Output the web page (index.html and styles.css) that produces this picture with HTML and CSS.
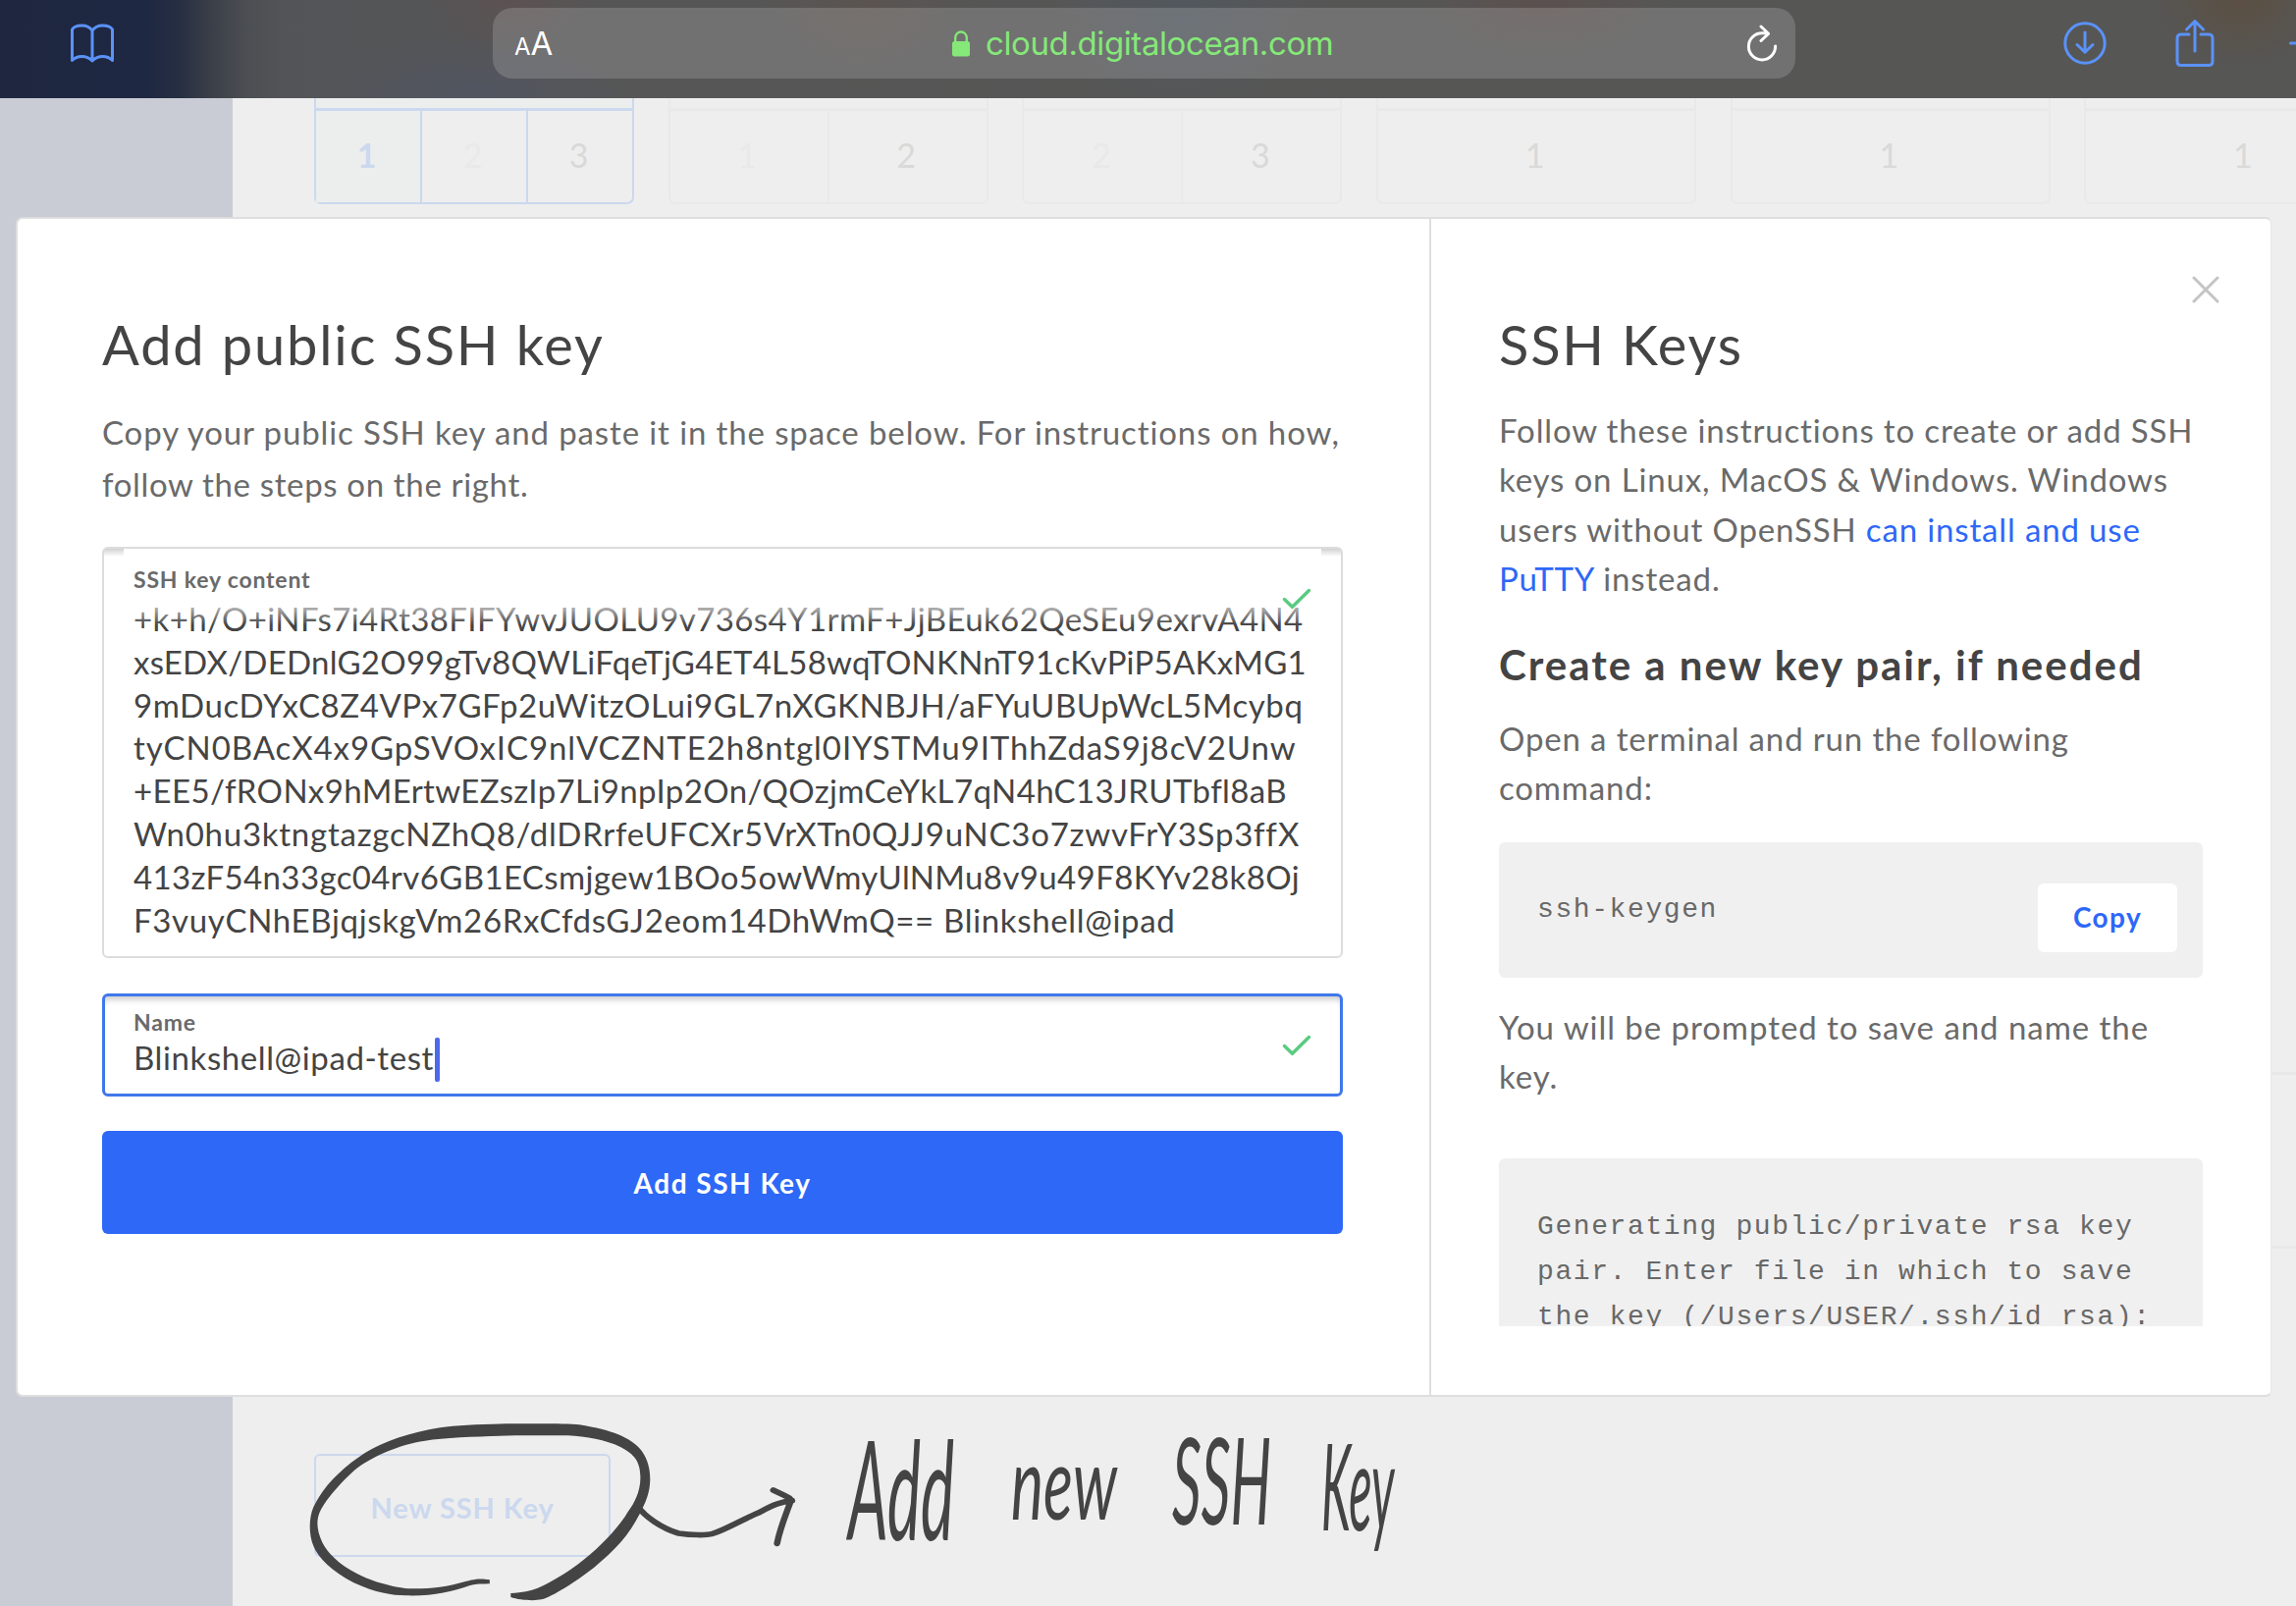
FILE: index.html
```html
<!DOCTYPE html>
<html lang="en">
<head>
<meta charset="utf-8">
<title>Add public SSH key</title>
<link rel="stylesheet" href="styles.css">
</head>
<body>
<header class="toolbar">
  <svg class="icon-book" viewBox="0 0 48 42" width="48" height="42"><path d="M24 8C21 4 17.500 3 13.500 3S5 4.500 3.500 7V38.500C6.500 35.500 9.500 34.500 13.500 34.500S21 36 24 39C27 36 30.500 34.500 34.500 34.500S41.500 35.500 44.500 38.500V7C43 4.500 38.500 3 34.500 3S27 4 24 8ZM24 8V39"/></svg>
  <div class="address">
    <div class="reader"><span class="reader-small">A</span><span class="reader-big">A</span></div>
    <div class="site">
      <svg viewBox="0 0 18 27" width="18" height="27"><rect x="0" y="11" width="18" height="15.500" rx="2.500" fill="#85e878"/><path d="M3.200 12V7.500a5.800 6 0 0 1 11.600 0V12" fill="none" stroke="#85e878" stroke-width="2.300"/></svg>
      <span>cloud.digitalocean.com</span>
    </div>
    <svg class="icon-reload" viewBox="0 0 32 38" width="32" height="38"><path d="M22 8.700H16A13.600 13.600 0 1 0 29.600 22M15 2L22.500 9.300L15 16.500"/></svg>
  </div>
  <div class="actions">
    <svg viewBox="0 0 46 46" width="46" height="46"><circle cx="23" cy="23" r="20.200"/><path d="M23 12V32M15 24.500L23 32.300L31 24.500"/></svg>
    <svg viewBox="0 0 42 52" width="42" height="52"><path d="M15 17H7Q3 17 3 21V44.500Q3 48.500 7 48.500H35Q39 48.500 39 44.500V21Q39 17 35 17H27M21 34V3.500M12.500 12L21 3.500L29.500 12"/></svg>
    <svg class="icon-plus" viewBox="0 0 36 36" width="36" height="36"><path d="M1.500 18H34.500M18 1.500V34.500"/></svg>
  </div>
</header>

<div class="page">
  <aside class="sidebar"></aside>
  <main class="content">
    <div class="regions">
      <div class="region selected"><span class="slot active">1</span><span class="slot off">2</span><span class="slot">3</span></div>
      <div class="region"><span class="slot off">1</span><span class="slot">2</span></div>
      <div class="region"><span class="slot off">2</span><span class="slot">3</span></div>
      <div class="region"><span class="slot">1</span></div>
      <div class="region"><span class="slot">1</span></div>
      <div class="region"><span class="slot">1</span></div>
    </div>
    <div class="panel-edge"></div>
    <div class="new-key">New SSH Key</div>
  </main>
</div>

<section class="modal">
  <div class="form-pane">
    <h1>Add public SSH key</h1>
    <p class="intro">Copy your public SSH key and paste it in the space below. For instructions on how, <span class="intro-end">follow the steps on the right.</span></p>
    <div class="field key-field">
      <div class="label">SSH key content</div>
      <div class="key-text">
        <span class="k1">+k+h/O+iNFs7i4Rt38FIFYwvJUOLU9v736s4Y1rmF+JjBEuk62QeSEu9exrvA4N4</span>
        <span class="k2">xsEDX/DEDnlG2O99gTv8QWLiFqeTjG4ET4L58wqTONKNnT91cKvPiP5AKxMG1</span>
        <span class="k3">9mDucDYxC8Z4VPx7GFp2uWitzOLui9GL7nXGKNBJH/aFYuUBUpWcL5Mcybq</span>
        <span class="k4">tyCN0BAcX4x9GpSVOxIC9nlVCZNTE2h8ntgl0IYSTMu9IThhZdaS9j8cV2Unw</span>
        <span class="k5">+EE5/fRONx9hMErtwEZszIp7Li9npIp2On/QOzjmCeYkL7qN4hC13JRUTbfl8aB</span>
        <span class="k6">Wn0hu3ktngtazgcNZhQ8/dlDRrfeUFCXr5VrXTn0QJJ9uNC3o7zwvFrY3Sp3ffX</span>
        <span class="k7">413zF54n33gc04rv6GB1ECsmjgew1BOo5owWmyUlNMu8v9u49F8KYv28k8Oj</span>
        <span class="k8">F3vuyCNhEBjqjskgVm26RxCfdsGJ2eom14DhWmQ== Blinkshell@ipad</span>
      </div>
      <svg class="check" viewBox="0 0 30 22" width="30" height="22"><path d="M2.500 11.500L10.500 19.300L27.500 2.500"/></svg>
    </div>
    <div class="field name-field">
      <div class="label">Name</div>
      <div class="value">Blinkshell@ipad-test<i class="caret"></i></div>
      <svg class="check" viewBox="0 0 30 22" width="30" height="22"><path d="M2.500 11.500L10.500 19.300L27.500 2.500"/></svg>
    </div>
    <div class="submit">Add SSH Key</div>
  </div>
  <div class="help-pane">
    <svg class="close" viewBox="0 0 28 28" width="28" height="28"><path d="M2 2L26 26M26 2L2 26"/></svg>
    <h1>SSH Keys</h1>
    <div class="help-scroll">
      <p>Follow these instructions to create or add SSH<br>keys on Linux, MacOS &amp; Windows. Windows<br>users without OpenSSH <a>can install and use<br>PuTTY</a> instead.</p>
      <h2>Create a new key pair, if needed</h2>
      <p>Open a terminal and run the following<br>command:</p>
      <div class="code command"><code>ssh-keygen</code><div class="copy">Copy</div></div>
      <p class="after">You will be prompted to save and name the<br>key.</p>
      <div class="code output"><code>Generating public/private rsa key<br>pair. Enter file in which to save<br>the key (/Users/USER/.ssh/id_rsa):</code></div>
    </div>
  </div>
</section>

<div class="annotation">
  <svg class="circle-arrow" viewBox="0 0 1568 708" preserveAspectRatio="none">
    <path class="ring" d="M572 628C540 622 525 628 495 637C440 655 400 655 360 655C330 655 260 635 220 610C170 580 140 545 127 515C112 480 110 450 118 425C130 390 175 330 215 290C260 250 330 215 400 203C460 192 560 190 640 187L780 187C830 190 880 200 920 222C960 245 972 270 973 310C975 350 960 390 940 420C920 460 880 510 840 550C800 590 740 635 700 653C680 662 660 666 628 669L628 681C650 690 690 693 710 688C740 678 800 635 850 590C890 552 930 510 960 450C980 410 995 375 998 340C1003 290 990 250 970 225C945 195 900 170 810 154C780 150 700 151 640 151C560 152 490 155 440 163C360 178 290 205 240 240C180 285 130 340 103 405C90 440 90 490 103 525C115 560 150 600 210 637C270 668 310 676 350 676C420 678 470 665 520 645C540 638 555 641 572 640Z"/>
    <path class="arrow" d="M966 403C985 435 1030 470 1075 486C1110 492 1150 492 1165 487C1200 475 1250 440 1290 422C1330 395 1350 390 1377 386M1327 354L1360 372Q1380 382 1372 392C1360 430 1345 470 1337 517"/>
  </svg>
  <div class="note"><span class="n1">Add</span><span class="n2">new</span><span class="n3">SSH</span><span class="n4">Key</span></div>
</div>
</body>
</html>
```
FILE: styles.css
```css
* { box-sizing: border-box; }
body { margin: 0; width: 2339px; height: 1636px; overflow: hidden; position: relative; background: #eeeeee; font-family: Lato, "Open Sans", sans-serif; color: #444; }
h1, h2, p { margin: 0; font-weight: 400; }
svg { display: block; fill: none; flex: none; stroke-linecap: round; stroke-linejoin: round; }

/* Browser toolbar */
.toolbar {
  display: flex; align-items: center; height: 100px; padding: 0 0 12px 70px; position: relative;
  background:
    radial-gradient(ellipse 90px 70px at 2282px 0, rgba(96, 74, 48, .5), transparent),
    radial-gradient(ellipse 130px 60px at 1570px 0, rgba(100, 70, 66, .35), transparent),
    radial-gradient(ellipse 130px 90px at 1205px 20px, rgba(76, 90, 104, .5), transparent),
    radial-gradient(ellipse 110px 70px at 880px 10px, rgba(104, 80, 70, .3), transparent),
    radial-gradient(ellipse 90px 60px at 520px 0, rgba(104, 74, 76, .35), transparent),
    radial-gradient(ellipse 160px 60px at 480px 96px, rgba(76, 86, 110, .45), transparent),
    linear-gradient(90deg, #1e2640 0, #1f2842 150px, #262e42 182px, #3a3f48 215px, #4b4e53 250px, #535457 290px, #565656 600px, #565655 100%);
}
.icon-book { stroke: #5b92f8; stroke-width: 3; }
.address { display: flex; flex: none; align-items: center; justify-content: space-between; width: 1327px; height: 72px; margin-left: 384px; padding: 0 18px 0 22px; border-radius: 20px; background: rgba(255, 255, 255, .165); }
.reader { color: #fff; display: flex; align-items: baseline; font-family: Inter, sans-serif; line-height: 40px; padding-top: 4px; }
.reader-small { font-size: 24px; }
.reader-big { font-size: 33px; }
.site { display: flex; align-items: center; gap: 16px; color: #85e878; font-family: Inter, sans-serif; font-size: 33px; letter-spacing: -.4px; line-height: 40px; margin-left: -14px; }
.icon-reload { stroke: #fff; stroke-width: 3; }
.actions { display: flex; flex: none; align-items: center; margin-left: 272px; stroke: #5b92f8; stroke-width: 3; }
.actions svg + svg { margin-left: 68px; }
.actions .icon-plus { margin-left: 75px; }

/* Dimmed page behind the dialog */
.page { display: flex; height: 1536px; }
.sidebar { flex: none; width: 237px; background: #c9ccd5; }
.content { flex: none; width: 2102px; padding-left: 83px; overflow: hidden; }
.regions { display: flex; gap: 34.7px; width: 2200px; }
.region { display: flex; flex: none; width: 326px; height: 108px; padding-top: 10px; border: 2px solid #e9e9e9; border-top: 0; border-radius: 0 0 7px 7px; }
.slot { flex: 1; border-top: 3px solid #e9e9e9; text-align: center; font-size: 34px; line-height: 90px; color: #d9d9d9; padding-right: 3px; }
.slot + .slot { border-left: 2px solid #e9e9e9; }
.slot.off { color: #e9e9e9; }
.region.selected, .selected .slot { border-color: #cbd8ee; }
.region.selected { background: linear-gradient(#ebeeed 10px, transparent 10px); }
.slot.active { background: #ebeeed; color: #cbd8ee; font-weight: 700; }
.panel-edge { height: 180px; margin: 884px 0 0 1900px; border: 2px solid #e8e8e8; border-width: 3px 0; }
.new-key { width: 302px; height: 105px; margin-top: 209px; border: 2px solid #cbd8ee; border-radius: 6px; text-align: center; font-size: 29px; font-weight: 700; letter-spacing: .9px; line-height: 105px; color: #cbd8ee; }

/* Dialog */
.modal { position: absolute; left: 16px; top: 221px; width: 2299px; height: 1202px; display: flex; background: #fff; border: 2px solid #dedede; border-right-color: #ebebeb; border-radius: 7px; }
.form-pane { width: 1438px; padding: 94px 0 0 86px; }
.help-pane { flex: 1; padding: 94px 0 0 69px; border-left: 2px solid #dfdfdf; position: relative; }
h1 { font-size: 56px; line-height: 68px; letter-spacing: 1.85px; }
.help-pane h1 { letter-spacing: 1.8px; }
p { font-size: 33px; color: #6a6a6a; }
.intro { width: 1290px; margin-top: 29px; line-height: 53px; letter-spacing: .88px; }
.intro-end { letter-spacing: .65px; }
.field { position: relative; width: 1264px; padding-left: 30px; border-radius: 6px; }
.key-field { height: 419px; margin-top: 37px; padding-top: 19px; border: 2px solid #dcdcdc; background: linear-gradient(#d2d2d2, #fff) 0 0 / 20px 8px no-repeat, linear-gradient(#d2d2d2, #fff) 100% 0 / 20px 8px no-repeat; }
.label { font-size: 23px; line-height: 25px; font-weight: 700; letter-spacing: .8px; color: #6a6a6a; }
.key-text { position: relative; margin-top: 6px; font-size: 33px; line-height: 43.8px; white-space: nowrap; font-variant-ligatures: none; }
.key-text::after { content: ""; position: absolute; inset: 0 0 auto; height: 28px; background: linear-gradient(rgba(255, 255, 255, .55) 11px, rgba(255, 255, 255, 0)); }
.key-text span { display: block; }
.k1 { letter-spacing: .38px; } .k2 { letter-spacing: .26px; } .k3 { letter-spacing: .57px; } .k4 { letter-spacing: .92px; }
.k5 { letter-spacing: .38px; } .k6 { letter-spacing: .75px; } .k7 { letter-spacing: .38px; } .k8 { letter-spacing: .66px; }
.check { position: absolute; right: 30px; top: 40px; stroke: #5acb81; stroke-width: 3.5; }
.name-field { height: 105px; margin-top: 36px; padding: 14px 0 0 29px; border: 3px solid #3f78ea; box-shadow: inset 0 7px 6px -4px #c9c9c9; }
.name-field .check { top: 39px; right: 29px; }
.value { display: flex; align-items: center; font-size: 33px; line-height: 44px; letter-spacing: .6px; }
.caret { width: 5px; height: 45px; margin: 3px 0 -3px 1px; border-radius: 2px; background: #4e68ea; }
.submit { width: 1264px; height: 105px; margin-top: 35px; border-radius: 6px; background: #2d68f7; color: #fff; text-align: center; font-size: 28px; font-weight: 700; letter-spacing: 1.5px; line-height: 107px; }
.close { position: absolute; top: 58px; right: 52px; stroke: #c4c4c4; stroke-width: 3; }
.help-scroll { width: 780px; height: 938px; margin-top: 28px; overflow: hidden; }
.help-scroll p { line-height: 50.3px; letter-spacing: .85px; }
.help-scroll a { color: #2d68f7; }
h2 { margin: 38px 0 25px; font-size: 42px; line-height: 50px; font-weight: 700; letter-spacing: 2px; }
.code { display: flex; justify-content: space-between; width: 717px; padding: 47px 26px 0 39px; border-radius: 6px; background: #f0f0f0; color: #686868; }
code { font-family: "Liberation Mono", monospace; font-size: 28px; line-height: 46px; letter-spacing: 1.6px; white-space: nowrap; }
.command { height: 138px; margin-top: 30px; padding-top: 42px; }
.command code { margin-top: 4px; }
.copy { width: 142px; height: 70px; border-radius: 6px; background: #fff; color: #2d68f7; text-align: center; font-size: 28px; font-weight: 700; letter-spacing: 1.4px; line-height: 68px; }
.help-scroll .after { margin-top: 25px; letter-spacing: .95px; }
.output { height: 240px; margin-top: 59px; }

/* Pen marks drawn over the page */
.annotation { position: absolute; left: 280px; top: 1400px; width: 1200px; height: 236px; }
.circle-arrow { width: 600px; height: 236px; }
.ring { fill: #444; }
.arrow { stroke: #444; stroke-width: 17; }
.note { position: absolute; inset: 0; font-weight: 400; font-style: italic; color: #444; line-height: 120px; }
.note span { position: absolute; transform-origin: 0 50%; }
.n1 { left: 584px; top: 55px; font-size: 140px; transform: scaleX(.46); }
.n2 { left: 750px; top: 48px; font-size: 104px; transform: scaleX(.6); }
.n3 { left: 914px; top: 46px; font-size: 122px; transform: scaleX(.48); }
.n4 { left: 1066px; top: 52px; font-size: 122px; transform: scaleX(.4); }
```
